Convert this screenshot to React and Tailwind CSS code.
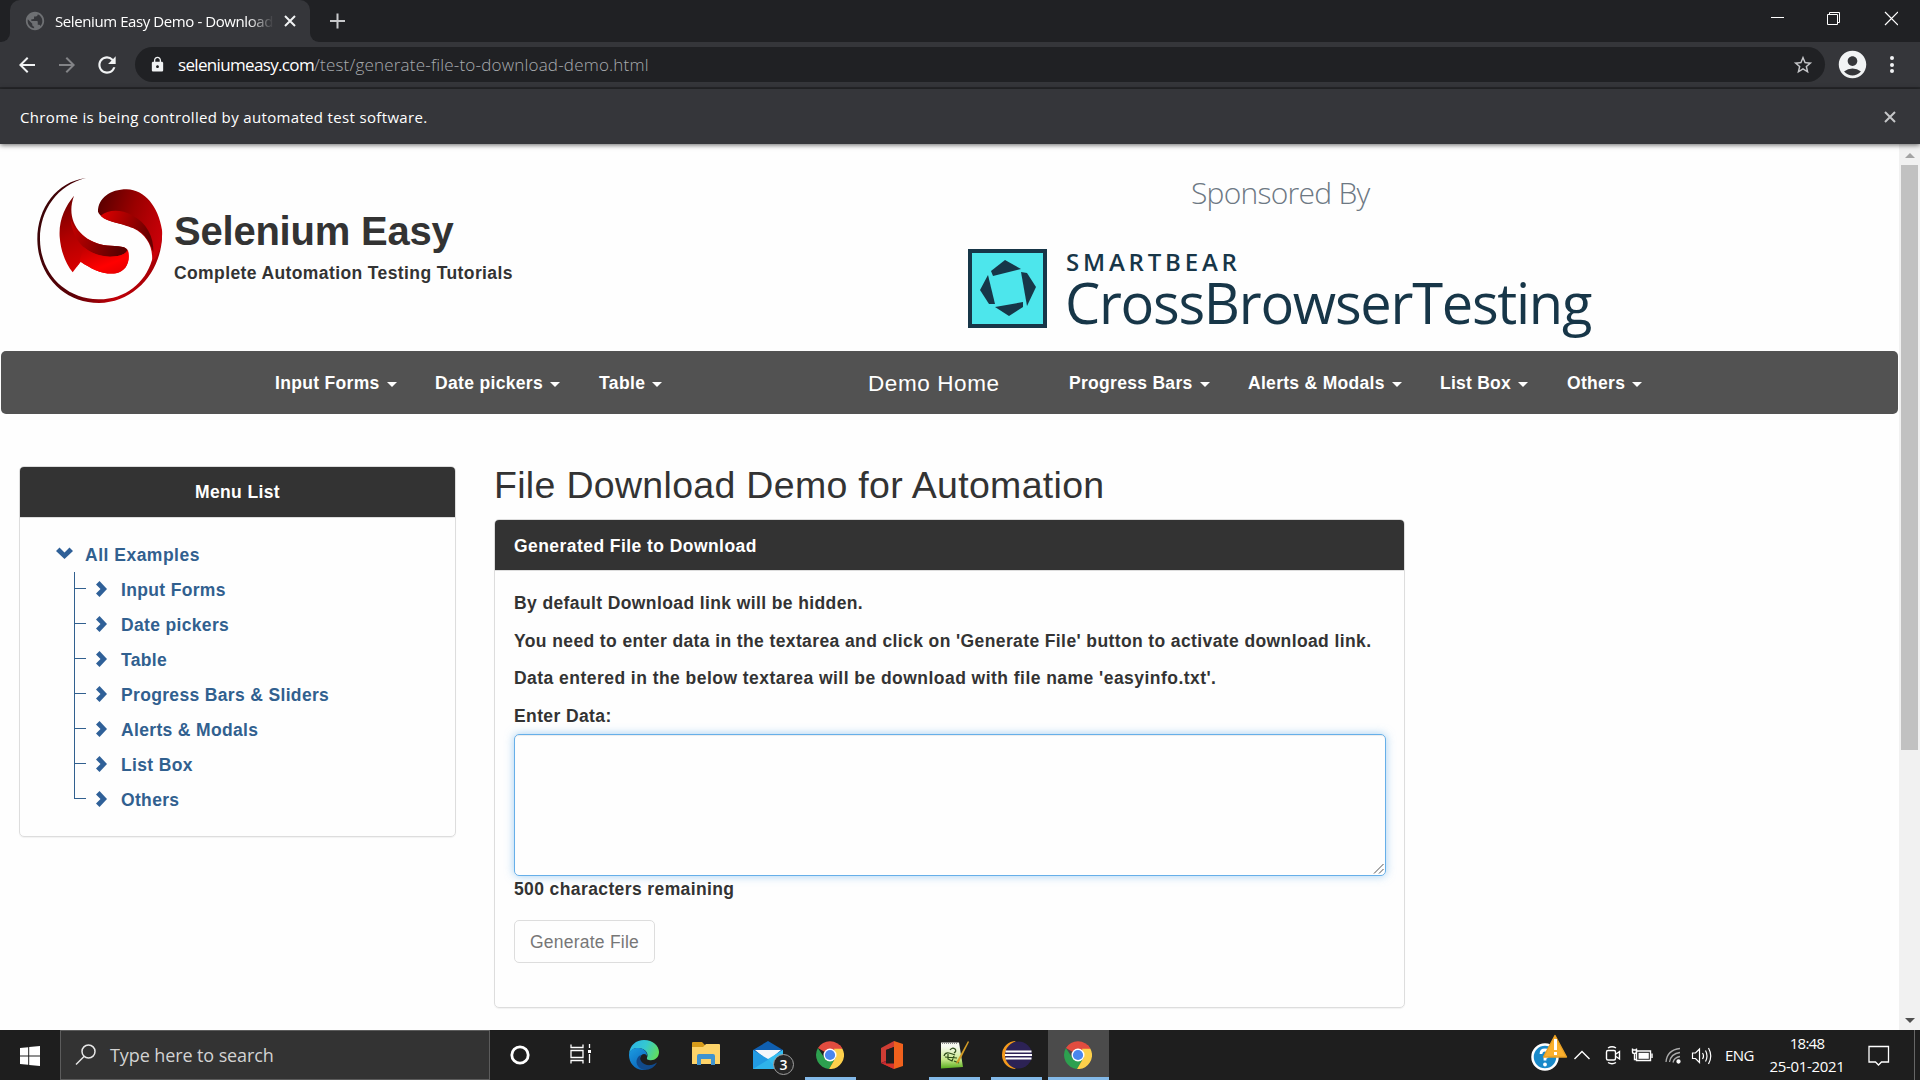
import React from 'react';
import { MdArrowBack, MdArrowForward, MdRefresh, MdLock, MdStarBorder, MdAccountCircle, MdPublic } from 'react-icons/md';

const menuItems = ['Input Forms', 'Date pickers', 'Table', 'Progress Bars & Sliders', 'Alerts & Modals', 'List Box', 'Others'];

const navItems = [
  { label: 'Input Forms', width: 'w-[160px]', spacing: 'tracking-[0.32px]' },
  { label: 'Date pickers', width: 'w-[164px]', spacing: 'tracking-[0.33px]' },
  { label: 'Table', width: 'w-[269px]', spacing: 'tracking-[0.4px]' },
  { label: 'Demo Home', home: true, width: 'w-[201px]' },
  { label: 'Progress Bars', width: 'w-[179px]', spacing: 'tracking-[0.3px]' },
  { label: 'Alerts & Modals', width: 'w-[192px]', spacing: 'tracking-[0.3px]' },
  { label: 'List Box', width: 'w-[127px]', spacing: 'tracking-[0.25px]' },
  { label: 'Others', width: 'w-[90px]', spacing: 'tracking-[0.3px]' },
];

function Cross({ size, stroke, color }) {
  return (
    <svg width={size} height={size} viewBox="0 0 12 12" className="shrink-0">
      <path d="M1 1L11 11M11 1L1 11" stroke={color} strokeWidth={stroke} fill="none" />
    </svg>
  );
}

function TabStrip() {
  return (
    <div className="flex h-[42px] bg-[#202124]">
      <div className="flex w-[10px] items-end bg-[#35363a]"><div className="h-full w-full rounded-br-[9px] bg-[#202124]" /></div>
      <div className="flex w-[300px] items-center rounded-t-[10px] bg-[#35363a] pl-[14px]">
        <MdPublic className="h-[22px] w-[22px] shrink-0 text-[#6e7073]" />
        <div className="ml-[9px] w-[219px] overflow-hidden whitespace-nowrap font-['Open_Sans'] text-[15px] leading-[22px] tracking-[-0.41px] text-white [mask-image:linear-gradient(to_right,black_88%,transparent_100%)]">
          Selenium Easy Demo - Download
        </div>
        <div className="ml-[10px] flex"><Cross size={12} stroke={2} color="#f1f3f4" /></div>
      </div>
      <div className="flex w-[10px] items-end bg-[#35363a]"><div className="h-full w-full rounded-bl-[9px] bg-[#202124]" /></div>
      <svg width="16" height="42" viewBox="0 0 16 42" className="ml-[10px]"><path d="M0 21H15M7.5 13.5V28.5" stroke="#c8c9cb" strokeWidth="2" /></svg>
      <div className="ml-auto flex items-center">
        <svg width="128" height="42" viewBox="0 0 128 42" className="mr-[22px]" fill="none" stroke="#fff">
          <path d="M1 17.5H14" />
          <path d="M57.5 14.5h10v10h-10zM59.500 14.500v-2h10v10h-2" />
          <path d="M115 12L128 25M128 12L115 25" strokeWidth="1.2" />
        </svg>
      </div>
    </div>
  );
}

function Toolbar() {
  return (
    <div className="flex h-[47px] items-center border-b-2 border-[#27282b] bg-[#35363a] pl-[15px] text-[#f1f3f4]">
      <MdArrowBack className="h-6 w-6" />
      <MdArrowForward className="ml-[16px] h-6 w-6 text-[#838487]" />
      <MdRefresh className="ml-[15px] h-[26px] w-[26px]" />
      <div className="ml-[15px] flex h-[35px] w-[1690px] items-center rounded-full bg-[#202124] pl-[14px] pr-[11px]">
        <MdLock className="h-[17px] w-[17px]" />
        <div className="ml-[12px] whitespace-nowrap font-['Open_Sans'] text-[17px] leading-[24px] text-white">
          <span className="tracking-[-0.66px]">seleniumeasy.com</span>
          <span className="font-light tracking-[0.2px] text-[#a8abaf]">/test/generate-file-to-download-demo.html</span>
        </div>
        <MdStarBorder className="ml-auto h-[22px] w-[22px] text-[#c5c6c9]" />
      </div>
      <MdAccountCircle className="ml-[11px] h-[33px] w-[33px]" />
      <div className="ml-[21px] flex flex-col gap-[2.5px]">
        <i className="h-1 w-1 rounded-full bg-[#f1f3f4]" />
        <i className="h-1 w-1 rounded-full bg-[#f1f3f4]" />
        <i className="h-1 w-1 rounded-full bg-[#f1f3f4]" />
      </div>
    </div>
  );
}

function InfoBar() {
  return (
    <div className="relative z-10 flex h-[55px] items-center justify-between bg-[#35363a] pl-[20px] pr-[24px] shadow-[0_1px_5px_rgba(0,0,0,0.6)]">
      <span className="pt-[2px] font-['Open_Sans'] text-[15px] tracking-[0.34px] text-white">Chrome is being controlled by automated test software.</span>
      <Cross size={12} stroke={2} color="#c5c6c8" />
    </div>
  );
}

function SeleniumLogo() {
  return (
    <svg width="150" height="150" viewBox="0 0 450 450" className="shrink-0">
      <defs>
        <linearGradient id="ring" x1="0" y1="0.3" x2="1" y2="0.6">
          <stop offset="0" stopColor="#3a0508" /><stop offset="0.45" stopColor="#5e0006" /><stop offset="0.75" stopColor="#c00008" /><stop offset="1" stopColor="#a50006" />
        </linearGradient>
        <linearGradient id="upper" x1="0" y1="0.2" x2="1" y2="0.6">
          <stop offset="0" stopColor="#5a0000" /><stop offset="0.5" stopColor="#9a0000" /><stop offset="1" stopColor="#c90008" />
        </linearGradient>
        <linearGradient id="band" x1="0" y1="0" x2="1" y2="0.3">
          <stop offset="0" stopColor="#e00000" /><stop offset="0.55" stopColor="#a00000" /><stop offset="1" stopColor="#680000" />
        </linearGradient>
        <linearGradient id="left" x1="0" y1="0" x2="0.4" y2="1">
          <stop offset="0" stopColor="#6a0000" /><stop offset="0.5" stopColor="#b00000" /><stop offset="1" stopColor="#e00000" />
        </linearGradient>
        <linearGradient id="fold" x1="0" y1="0" x2="1" y2="0.2">
          <stop offset="0" stopColor="#c80000" /><stop offset="1" stopColor="#5a0000" />
        </linearGradient>
        <linearGradient id="lower" x1="0" y1="0" x2="0.8" y2="1">
          <stop offset="0" stopColor="#b80000" /><stop offset="0.7" stopColor="#ff0000" /><stop offset="1" stopColor="#e80000" />
        </linearGradient>
      </defs>
      <path d="M168 39C80 50 21 130 22 225C24 335 105 414 207 414C320 412 402 310 396 195C390 230 380 270 366 285C345 355 285 404 205 403C105 401 32 325 30 225C28 140 80 60 168 39Z" fill="url(#ring)" />
      <path d="M204 140C204 100 240 73 290 73C345 75 385 125 396 195C398 235 387 275 366 290C370 245 350 210 310 190C275 173 215 170 204 140Z" fill="url(#upper)" />
      <path d="M212 152C235 132 275 133 305 150C350 173 372 215 370 262C358 225 340 200 310 188C280 174 232 174 212 152Z" fill="url(#band)" />
      <path d="M132 92C105 125 86 165 89 215C92 255 105 293 128 322L152 290C185 312 220 330 258 325C290 318 302 285 293 255C285 240 250 245 220 240C150 225 105 165 132 92Z" fill="url(#left)" />
      <path d="M122 165C130 235 175 272 240 275C265 275 285 270 292 255C285 240 250 245 220 240C170 230 135 200 122 165Z" fill="url(#fold)" />
      <path d="M160 245C190 270 225 278 255 274C275 272 288 266 294 256C302 290 290 318 258 325C220 330 185 312 152 290L140 306C150 285 155 270 160 245Z" fill="url(#lower)" />
    </svg>
  );
}

function SponsorIcon() {
  return (
    <svg width="79" height="79" viewBox="0 0 79 79" className="shrink-0">
      <rect x="2" y="2" width="75" height="75" fill="#4de6ec" stroke="#173648" strokeWidth="4" />
      <g fill="#173648">
        <path d="M37 11L53 20L25 27L23 22Z" />
        <path d="M53 23L59 24L68 38L59 57Z" />
        <path d="M55 53L55 58L41 67L27 58Z" />
        <path d="M20 26L27 55L21 55L12 41Z" />
      </g>
    </svg>
  );
}

function Caret() {
  return <span className="ml-[7px] mt-[2px] inline-block border-x-[5px] border-t-[5px] border-x-transparent border-t-white" />;
}

function Header() {
  return (
    <div className="flex h-[207px]">
      <div className="flex w-[968px] pl-[30px] pt-[21px]">
        <SeleniumLogo />
        <div className="-ml-[6px] pt-[43px] font-bold text-[#333]">
          <div className="whitespace-nowrap text-[40px] leading-[46px] tracking-[-0.22px]">Selenium Easy</div>
          <div className="mt-[7px] whitespace-nowrap leading-[24px] tracking-[0.39px]">Complete Automation Testing Tutorials</div>
        </div>
      </div>
      <div className="w-[700px] font-['Open_Sans']">
        <div className="ml-[223px] mt-[29px] whitespace-nowrap text-[30px] font-light leading-[40px] tracking-[-0.75px] text-[#6d7883]">Sponsored By</div>
        <div className="mt-[36px] flex text-[#173648]">
          <SponsorIcon />
          <div className="ml-[19px]">
            <div className="text-[24px] font-semibold leading-[26px] tracking-[3.8px]">SMARTBEAR</div>
            <div className="-ml-[1px] -mt-[2px] whitespace-nowrap text-[56px] leading-[58px] tracking-[-1.27px]">CrossBrowserTesting</div>
          </div>
        </div>
      </div>
    </div>
  );
}

function NavBar() {
  return (
    <div className="mx-px flex h-[63px] items-center rounded-[5px] bg-[#525252] pl-[274px] pt-[2px] font-bold text-white">
      {navItems.map((n) => (
        <div key={n.label} className={`${n.width} flex shrink-0 items-center whitespace-nowrap`}>
          {n.home ? (
            <span className="text-[22.5px] font-normal tracking-[0.6px]">{n.label}</span>
          ) : (
            <>
              <span className={n.spacing}>{n.label}</span>
              <Caret />
            </>
          )}
        </div>
      ))}
    </div>
  );
}

function MenuPanel() {
  return (
    <div className="mt-[52px] h-[371px] w-[437px] shrink-0 rounded-[5px] border border-[#ddd] shadow-[0_1px_1px_rgba(0,0,0,0.05)]">
      <div className="h-[51px] rounded-t-[4px] border-b border-[#ddd] bg-[#333] text-center font-bold leading-[50px] tracking-[0.37px] text-white">Menu List</div>
      <div className="pl-[36px] pt-[19px] font-bold text-[#31608f]">
        <div className="flex h-[35px] items-center">
          <svg width="17" height="12" viewBox="0 0 17 12" className="-mt-[4px]"><path d="M0 4L3.500 0.500L8.500 5.500L13.500 0.500L17 4L8.500 12Z" fill="#2f6098" /></svg>
          <span className="ml-[12px] pt-[2px] tracking-[0.5px]">All Examples</span>
        </div>
        <div className="ml-[18px]">
          {menuItems.map((m, i) => (
            <div key={m} className="flex h-[35px]">
              <div className="flex w-[12px] flex-col">
                <div className="h-[17px] border-b border-l border-[#31608f]" />
                {i < menuItems.length - 1 && <div className="h-[18px] border-l border-[#31608f]" />}
              </div>
              <div className="flex items-center">
                <svg width="11" height="16" viewBox="0 0 11 16" className="-mt-[2px] ml-[10px]"><path d="M0 3.500L3.500 0L11 8L3.500 16L0 12.500L4.500 8Z" fill="#2f6098" /></svg>
                <span className="ml-[14px] whitespace-nowrap pt-[2px] tracking-[0.34px]">{m}</span>
              </div>
            </div>
          ))}
        </div>
      </div>
    </div>
  );
}

function DownloadPanel() {
  return (
    <div className="ml-[38px] w-[911px] pt-[49px] text-[#333]">
      <h1 className="whitespace-nowrap text-[37.5px] leading-[44px] tracking-[0.31px]">File Download Demo for Automation</h1>
      <div className="mt-[12px] h-[489px] rounded-[5px] border border-[#ddd] shadow-[0_1px_1px_rgba(0,0,0,0.05)]">
        <div className="h-[51px] rounded-t-[4px] border-b border-[#ddd] bg-[#333] pl-[19px] font-bold leading-[52px] tracking-[0.44px] text-white">Generated File to Download</div>
        <div className="pl-[19px] pr-[18px] pt-[20px] font-bold tracking-[0.39px]">
          <p className="mb-[12.500px] leading-[25px]">By default Download link will be hidden.</p>
          <p className="mb-[12.500px] whitespace-nowrap leading-[25px]">You need to enter data in the textarea and click on 'Generate File' button to activate download link.</p>
          <p className="mb-[12.500px] leading-[25px] tracking-[0.46px]">Data entered in the below textarea will be download with file name 'easyinfo.txt'.</p>
          <p className="leading-[25px]">Enter Data:</p>
          <div className="mt-[5px] flex h-[142px] items-end justify-end rounded-[5px] border border-[#66afe9] p-px shadow-[inset_0_1px_1px_rgba(0,0,0,0.075),0_0_10px_rgba(102,175,233,0.6)]">
            <svg width="11" height="11" viewBox="0 0 11 11" stroke="#555" strokeWidth="1"><path d="M1 10.500L10.500 1M6 10.500L10.500 6" /></svg>
          </div>
          <p className="pt-px leading-[25px]">500 characters remaining</p>
          <button className="mt-[18px] flex h-[43px] w-[141px] items-center justify-center rounded-[5px] border border-[#ddd] pt-[2px] font-normal tracking-[0.23px] text-[#777]">Generate File</button>
        </div>
      </div>
    </div>
  );
}

function ScrollBar() {
  return (
    <div className="flex w-[21px] shrink-0 flex-col items-center bg-[#f1f1f1]">
      <span className="mt-[9px] border-x-[5px] border-b-[5px] border-x-transparent border-b-[#a3a3a3]" />
      <span className="mt-[7px] h-[585px] w-[17px] bg-[#c1c1c1]" />
      <span className="mb-[7px] mt-auto border-x-[5px] border-t-[5px] border-x-transparent border-t-[#505050]" />
    </div>
  );
}

function ChromeIcon() {
  return (
    <svg width="28" height="28" viewBox="0 0 28 28">
      <path d="M14 14L1.900 7A14 14 0 0 1 26.100 7.500L20 14Z" fill="#e24c3f" />
      <path d="M1.900 7A14 14 0 0 0 13 28L19.500 17L8.500 17Z" fill="#2da04f" />
      <path d="M26.300 7.500A14 14 0 0 1 13 28L20 16L18 7.500Z" fill="#fdd04b" />
      <path d="M14 7.500H26.300L24 4L14 2Z" fill="#e24c3f" />
      <circle cx="14" cy="14" r="6.500" fill="#fff" />
      <circle cx="14" cy="14" r="5.100" fill="#4a86ee" />
    </svg>
  );
}

function EdgeIcon() {
  return (
    <svg width="30" height="30" viewBox="0 0 30 30">
      <defs>
        <linearGradient id="edgeTop" x1="0" y1="0.3" x2="1" y2="0.6"><stop offset="0" stopColor="#2bb5e8" /><stop offset="0.5" stopColor="#35c8d0" /><stop offset="1" stopColor="#62de5c" /></linearGradient>
        <linearGradient id="edgeLow" x1="0" y1="0" x2="0.6" y2="1"><stop offset="0" stopColor="#1b9de2" /><stop offset="1" stopColor="#0c67bc" /></linearGradient>
      </defs>
      <path d="M0 14C1 5 7 0 15 0C24 0 30 6 30 12C30 18 25 21 20 20C17 19.500 18 18 18.500 16C19 12 15 8 9 8C4 8 1 11 0 14Z" fill="url(#edgeTop)" />
      <path d="M0 15C0 10 5 7.500 10 8C15 8.500 18.500 12 18 16C17 13 12 13 11 18C10 24 17 30 17 30C7 31 0 24 0 15Z" fill="url(#edgeLow)" />
      <path d="M12 15C9 21 15 26 22 25C25 24.500 27 23 28 22.500C26 27 21 30 15.500 30C10 29 6 24 8 19C9 16.500 10.500 15.500 12 15Z" fill="#114a8b" />
    </svg>
  );
}

function FolderIcon() {
  return (
    <svg width="28" height="24" viewBox="0 0 28 24" className="-mt-[2px]">
      <path d="M0 1Q0 0 1 0H10L13 3H27V8H0Z" fill="#d79b19" />
      <path d="M0 5H11L14 2H27Q28 2 28 3V22H0Z" fill="#fdd369" />
      <path d="M5 23V14Q5 12 7 12H21Q23 12 23 14V23H19V17H9V23Z" fill="#3f93cf" />
    </svg>
  );
}

function MailIcon() {
  return (
    <div className="relative">
      <svg width="30" height="28" viewBox="0 0 30 28">
        <path d="M0 9L15 0L30 9V28H0Z" fill="#0f5fb0" />
        <path d="M2 9H28L15 20Z" fill="#f4f6fa" />
        <path d="M30 9L15 18L0 28H30Z" fill="#35bdf0" />
        <path d="M0 9L15 18L24 28H0Z" fill="#229ae2" />
        <path d="M0 28L17 17.500L30 9V28Z" fill="#35bdf0" fillOpacity="0.7" />
      </svg>
      <span className="absolute left-[20px] top-[13px] flex h-[21px] w-[21px] items-center justify-center rounded-full border border-[#a0a0a0] bg-[#262626] font-['Open_Sans'] text-[14px] font-semibold leading-none text-white">3</span>
    </div>
  );
}

function OfficeIcon() {
  return (
    <svg width="24" height="28" viewBox="0 0 24 28">
      <path d="M1 7L14 0V6L6 9V20L1 22Z" fill="#cf3d34" />
      <path d="M14 0L23 3V25L14 28Z" fill="#f0611d" />
      <path d="M1 22L6 20L14 24V28Z" fill="#b92334" />
      <path d="M6 9L14 6V23.500H6Z" fill="#1e1e1e" />
      <path d="M1 22L5 22.500H14V28Z" fill="#d6342b" />
    </svg>
  );
}

function NotepadIcon() {
  return (
    <svg width="29" height="28" viewBox="0 0 29 28">
      <defs><linearGradient id="page" x1="0" y1="0" x2="0" y2="1"><stop offset="0.15" stopColor="#f6f9f0" /><stop offset="0.65" stopColor="#c9e88c" /><stop offset="1" stopColor="#58ad1d" /></linearGradient></defs>
      <path d="M1 1.500H19L23 26L1 27.500Z" fill="url(#page)" />
      <path d="M2 2H18" stroke="#888" strokeDasharray="1 1" strokeWidth="2" />
      <path d="M4 15Q5 11 9 12T15 14M10 9Q12 6 15 8Q17 10 14 12M5 16L17 17M8 13V18L12 20L14 15M14 20L19 22" stroke="#2f4d1a" strokeWidth="1.200" fill="none" />
      <path d="M28 0L17 20L16 23L19 21L29 1Z" fill="#d49c26" />
    </svg>
  );
}

function EclipseIcon() {
  return (
    <svg width="31" height="28" viewBox="0 0 31 28">
      <path d="M15 0A14 14 0 0 0 15 28A16 16 0 0 1 15 0Z" fill="#f39a1d" />
      <ellipse cx="17.500" cy="14" rx="13.500" ry="13.500" fill="#2c2255" />
      <path d="M4.500 10.500H30.500M4 14H31M4.500 17.500H30.500" stroke="#fff" strokeWidth="1.900" />
    </svg>
  );
}

function TaskCell({ children, running, active }) {
  return (
    <div className="flex h-full w-[62px] flex-col items-center">
      <div className={active ? 'flex h-[47px] w-[61px] items-center justify-center bg-[#4b4b4b] pt-[3px]' : 'flex h-[47px] w-[61px] items-center justify-center pt-[3px]'}>{children}</div>
      {running && <div className={active ? 'h-[3px] w-[61px] bg-[#83b9e8]' : 'h-[3px] w-[51px] bg-[#83b9e8]'} />}
    </div>
  );
}

function Tray() {
  return (
    <div className="ml-auto flex h-full items-center font-['Open_Sans'] text-[15px] text-white">
      <svg width="182" height="50" viewBox="1530 1030 182 50" fill="none" stroke="#fff" strokeWidth="1.400">
        <circle cx="1545" cy="1057" r="12.500" fill="#1989c9" strokeWidth="2.500" />
        <path d="M1541 1054Q1541 1050 1545 1050Q1549 1050 1549 1053.500Q1549 1056 1545 1058V1060.500" strokeWidth="2.800" />
        <circle cx="1545" cy="1064.500" r="1.200" fill="#fff" />
        <path d="M1555 1035.500L1566.500 1057H1543.500Z" fill="#fbb02d" stroke="#e9a024" strokeLinejoin="round" />
        <path d="M1555.500 1039V1050M1555.500 1052V1055" strokeWidth="3" />
        <path d="M1574.500 1059L1582 1051.500L1589.500 1059" />
        <rect x="1606.500" y="1050.500" width="9" height="9.500" rx="1.500" />
        <path d="M1616 1054L1619.500 1051.500V1059L1616 1056.500M1608 1048Q1612 1045.500 1616 1048M1608 1062.500Q1612 1065 1616 1062.500" />
        <path d="M1636.500 1051H1650.500V1060.500H1636.500Z" />
        <path d="M1638.500 1052.800H1648.800V1058.800H1638.500Z" fill="#fff" stroke="none" />
        <path d="M1652 1053.500V1058M1632.500 1048.500V1052Q1632.500 1053.500 1634.500 1053.500T1636.500 1052V1048.500M1634.500 1054V1059.500H1637M1632 1050H1637" />
        <g stroke="#aaa" strokeWidth="1.300">
          <path d="M1666 1062Q1667 1050 1680 1048.500M1669.500 1062Q1671 1053.500 1680 1052.500M1673 1062.500Q1674 1057.500 1680 1056.500" />
          <circle cx="1678.500" cy="1061.500" r="1.500" fill="#fff" stroke="#fff" />
        </g>
        <path d="M1692.500 1053V1058.500H1695.500L1699.500 1062.500V1049L1695.500 1053ZM1702.500 1053Q1704.500 1056 1702.500 1059M1705.500 1050.500Q1708.500 1056 1705.500 1061.500M1708.500 1048Q1713 1056 1708.500 1064" strokeWidth="1.200" />
      </svg>
      <span className="ml-[13px] w-[44px] tracking-[-0.52px]">ENG</span>
      <div className="w-[76px] whitespace-nowrap text-center leading-[23px]">
        <div className="tracking-[-0.7px]">18:48</div>
        <div className="tracking-[-0.33px]">25-01-2021</div>
      </div>
      <svg width="22" height="22" viewBox="0 0 22 22" className="ml-[23px] mt-[2px]" fill="none" stroke="#fff" strokeWidth="1.300"><path d="M1 1.500H20.500V17H13.500L10.500 20L7.500 17H1Z" /></svg>
      <div className="ml-[24px] h-full w-[6px] border-l border-[#666]" />
    </div>
  );
}

function Taskbar() {
  return (
    <div className="flex h-[50px] items-center bg-[#1e1e1e]">
      <div className="flex w-[60px] pl-[20px] pt-px">
        <svg width="20" height="20" viewBox="0 0 20 20" fill="#fff"><path d="M0 2L8.200 1.200V9.500H0ZM9.200 1L20 0V9.500H9.200ZM0 10.500H8.200V18.800L0 18ZM9.200 10.500H20V20L9.200 19Z" /></svg>
      </div>
      <div className="flex h-[50px] w-[430px] items-center border border-[#5c5c5c] bg-[#333] pl-[14px]">
        <svg width="22" height="22" viewBox="0 0 22 22" fill="none" stroke="#e8e8e8" strokeWidth="1.500"><circle cx="13.500" cy="7.500" r="6.500" /><path d="M9 12.500L1 20.500" /></svg>
        <span className="ml-[13px] font-['Open_Sans'] text-[18px] tracking-[-0.1px] text-[#d2d2d2]">Type here to search</span>
      </div>
      <div className="-ml-px flex h-full">
        <TaskCell><svg width="20" height="20" viewBox="0 0 20 20"><circle cx="10" cy="10" r="8.200" fill="none" stroke="#fff" strokeWidth="2.800" /></svg></TaskCell>
        <TaskCell>
          <svg width="22" height="20" viewBox="0 0 22 20" fill="none" stroke="#fff" strokeWidth="1.300" className="-ml-[3px] -mt-[2px]"><path d="M1 0.500V3.500H13V0.500M1 6.500H13V13.500H1ZM1 19.500V16.500H13V19.500M19.500 0V4M19.500 10V19" /><path d="M18 6H21V9H18Z" fill="#fff" stroke="none" /></svg>
        </TaskCell>
        <TaskCell><EdgeIcon /></TaskCell>
        <TaskCell><FolderIcon /></TaskCell>
        <TaskCell><MailIcon /></TaskCell>
        <TaskCell running><ChromeIcon /></TaskCell>
        <TaskCell><OfficeIcon /></TaskCell>
        <TaskCell running><NotepadIcon /></TaskCell>
        <TaskCell running><EclipseIcon /></TaskCell>
        <TaskCell running active><ChromeIcon /></TaskCell>
      </div>
      <Tray />
    </div>
  );
}

export default function App() {
  return (
    <div className="flex h-[1080px] w-[1920px] flex-col overflow-hidden bg-[#fefefe] font-['Liberation_Sans',sans-serif] text-[17.5px]">
      <TabStrip />
      <Toolbar />
      <InfoBar />
      <div className="flex h-[886px]">
        <div className="w-[1899px] overflow-hidden">
          <Header />
          <NavBar />
          <div className="flex pl-[19px]">
            <MenuPanel />
            <DownloadPanel />
          </div>
        </div>
        <ScrollBar />
      </div>
      <Taskbar />
    </div>
  );
}
